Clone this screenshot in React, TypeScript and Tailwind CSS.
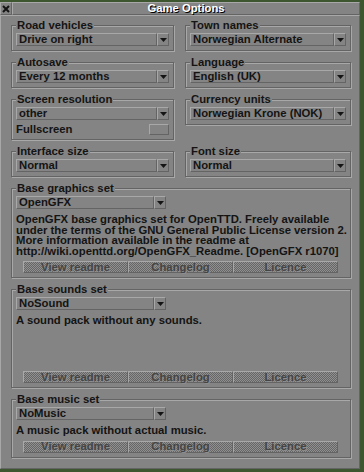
import React from 'react';

const raised = 'border border-t-[#a8a8a8] border-l-[#a8a8a8] border-r-[#646464] border-b-[#646464]';

function Arrow() {
  return (
    <svg width="7" height="4" viewBox="0 0 7 4">
      <polygon points="0,0 7,0 3.5,4" fill="#141414" />
    </svg>
  );
}

function Dropdown({ value, className = '' }: { value: string; className?: string }) {
  return (
    <div className={`flex h-[13px] ${className}`}>
      <div className={`flex-1 min-w-0 flex items-center pl-[2px] overflow-hidden whitespace-nowrap ${raised}`}>{value}</div>
      <div className={`w-[12px] flex items-center justify-center ${raised}`}>
        <Arrow />
      </div>
    </div>
  );
}

function Frame({ title, children, className = '' }: { title: string; children: React.ReactNode; className?: string }) {
  return (
    <fieldset
      className={`border border-[#646464] shadow-[inset_1px_1px_0_#a8a8a8,1px_1px_0_#a8a8a8] px-[4px] pt-[2px] pb-[4px] min-w-0 ${className}`}
    >
      <legend className="px-[1px] bg-[#848484] leading-[11px] h-[11px]">{title}</legend>
      {children}
    </fieldset>
  );
}

function Buttons() {
  const labels = ['View readme', 'Changelog', 'Licence'];
  return (
    <div className="grid grid-cols-3 w-[315px] ml-[7px] mt-[5px]">
      {labels.map((l) => (
        <div
          key={l}
          className={`h-[12px] flex items-center justify-center text-[#444] [text-shadow:1px_1px_0_#8e8e8e] bg-[repeating-conic-gradient(#666_0_25%,#909090_0_50%)] bg-[length:2px_2px] ${raised}`}
        >
          {l}
        </div>
      ))}
    </div>
  );
}

export default function App() {
  return (
    <div className="w-[364px] h-[472px] pt-[2px] bg-[#3e5630] font-['Liberation_Sans',Arial,sans-serif] font-bold text-[11.3px] text-[#141414] leading-[11px]">
      <div className="w-[360px] flex flex-col bg-[#848484]">
        <div className="flex h-[13px]">
          <div className={`w-[12px] flex items-center justify-center ${raised}`}>
            <svg width="8" height="8" viewBox="0 0 8 8">
              <path d="M1 1 L7 7 M7 1 L1 7" stroke="#141414" strokeWidth="2" />
            </svg>
          </div>
          <div className={`flex-1 flex items-center justify-center text-white [text-shadow:1px_1px_0_#000] ${raised}`}>
            Game Options
          </div>
        </div>
        <div className={`h-[454px] pl-[10px] pr-[8px] pt-[4px] ${raised}`}>
          <div className="grid grid-cols-[163px_166px] gap-x-[11px] gap-y-[6px] items-start">
            <Frame title="Road vehicles">
              <Dropdown value="Drive on right" />
            </Frame>
            <Frame title="Town names">
              <Dropdown value="Norwegian Alternate" />
            </Frame>
            <Frame title="Autosave">
              <Dropdown value="Every 12 months" />
            </Frame>
            <Frame title="Language">
              <Dropdown value="English (UK)" />
            </Frame>
            <Frame title="Screen resolution">
              <Dropdown value="other" />
              <div className="flex items-center justify-between h-[12px] mt-[3px]">
                <span>Fullscreen</span>
                <div className={`w-[20px] h-[11px] ${raised}`} />
              </div>
            </Frame>
            <Frame title="Currency units">
              <Dropdown value="Norwegian Krone (NOK)" />
            </Frame>
            <Frame title="Interface size">
              <Dropdown value="Normal" />
            </Frame>
            <Frame title="Font size">
              <Dropdown value="Normal" />
            </Frame>
            <Frame title="Base graphics set" className="col-span-2">
              <Dropdown value="OpenGFX" className="w-[150px]" />
              <p className="mt-[5px] leading-[10.5px] whitespace-nowrap">
                OpenGFX base graphics set for OpenTTD. Freely available
                <br />
                under the terms of the GNU General Public License version 2.
                <br />
                More information available in the readme at
                <br />
                http://wiki.openttd.org/OpenGFX_Readme. [OpenGFX r1070]
              </p>
              <Buttons />
            </Frame>
            <Frame title="Base sounds set" className="col-span-2">
              <Dropdown value="NoSound" className="w-[150px]" />
              <p className="mt-[5px] leading-[10.5px] h-[51px]">A sound pack without any sounds.</p>
              <Buttons />
            </Frame>
            <Frame title="Base music set" className="col-span-2">
              <Dropdown value="NoMusic" className="w-[150px]" />
              <p className="mt-[5px] leading-[10.5px]">A music pack without actual music.</p>
              <Buttons />
            </Frame>
          </div>
        </div>
      </div>
    </div>
  );
}
